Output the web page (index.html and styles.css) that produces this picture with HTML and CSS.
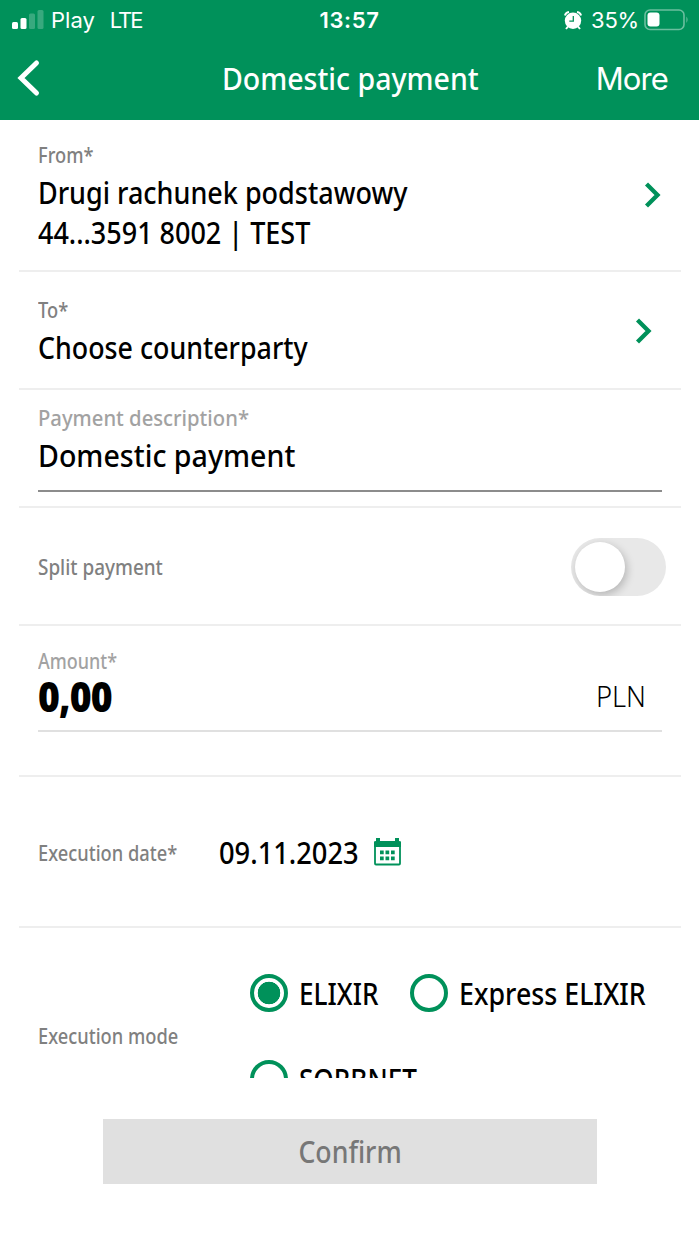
FILE: index.html
```html
<!DOCTYPE html>
<html lang="en">
<head>
<meta charset="utf-8">
<title>Domestic payment</title>
<link rel="stylesheet" href="styles.css">
</head>
<body>
<div class="screen">
  <header class="top">
    <div class="status">
      <div class="status-left">
        <svg class="signal" width="32" height="20" viewBox="0 0 32 20"><g fill="#fff"><rect x="0" y="12" width="6" height="7" rx="1.5"/><rect x="8.5" y="8" width="6" height="11" rx="1.5"/><g opacity=".22"><rect x="17" y="3.5" width="6" height="15.500" rx="1.500"/><rect x="25.500" y="0" width="6" height="19" rx="1.500"/></g></g></svg>
        <span class="carrier">Play</span><span class="network">LTE</span>
      </div>
      <span class="clock">13:57</span>
      <div class="status-right">
        <svg class="alarm" width="18" height="19" viewBox="0 0 18 19"><circle cx="9" cy="9.800" r="8.200" fill="#fff"/><path d="M1 4.500Q1.500 1.500 5 1M17 4.500Q16.500 1.500 13 1M4 15.500L2 18M14 15.500L16 18" stroke="#fff" stroke-width="2" fill="none"/><path d="M9.300 5V10.200H5.300" stroke="#00915a" stroke-width="1.300" fill="none"/></svg>
        <span class="percent">35%</span>
        <svg class="battery" width="45" height="22" viewBox="0 0 45 22"><rect x="1" y="1" width="39" height="19.500" rx="5" fill="none" stroke="#fff" stroke-opacity=".42" stroke-width="1.600"/><rect x="3.500" y="3.500" width="12" height="14" rx="3" fill="#fff"/><path d="M42.500 7.500Q44.500 10.700 42.500 14Z" fill="#fff" opacity=".5"/></svg>
      </div>
    </div>
    <nav class="nav">
      <svg class="back" width="24" height="38" viewBox="0 0 24 38"><path d="M19.500 4L4 19L19.500 34" fill="none" stroke="#fff" stroke-width="5" stroke-linecap="round" stroke-linejoin="miter"/></svg>
      <h1 class="title">Domestic payment</h1>
      <span class="more">More</span>
    </nav>
  </header>

  <main class="form">
    <section class="row from">
      <div>
        <div class="label">From*</div>
        <div class="value">Drugi rachunek podstawowy<br>44...3591 8002 | TEST</div>
      </div>
      <svg class="chevron" width="18" height="28" viewBox="0 0 18 28"><path d="M2.500 3L13.500 14L2.500 25" fill="none" stroke="#00915a" stroke-width="4.300"/></svg>
    </section>
    <section class="row to">
      <div>
        <div class="label">To*</div>
        <div class="value">Choose counterparty</div>
      </div>
      <svg class="chevron" width="18" height="28" viewBox="0 0 18 28"><path d="M2.500 3L13.500 14L2.500 25" fill="none" stroke="#00915a" stroke-width="4.300"/></svg>
    </section>
    <section class="row description">
      <div class="field strong">
        <div class="label pale">Payment description*</div>
        <div class="value">Domestic payment</div>
      </div>
    </section>
    <section class="row split">
      <div class="label">Split payment</div>
      <div class="toggle"><div class="knob"></div></div>
    </section>
    <section class="row amount">
      <div class="field">
        <div class="label pale">Amount*</div>
        <div class="sum"><span class="number">0,00</span><span class="currency">PLN</span></div>
      </div>
    </section>
    <section class="row date">
      <div class="label">Execution date*</div>
      <div class="value">09.11.2023</div>
      <svg class="calendar" width="27" height="28" viewBox="0 0 27 28"><rect x="1" y="4" width="25" height="22.500" rx="1" fill="none" stroke="#00915a" stroke-width="1.800"/><path fill="#00915a" d="M0 3.500H2V0H6V3H21V0H25V3.500H27V9H0ZM6 12.500H9.700V16.200H6ZM11.500 12.500H15.200V16.200H11.500ZM17 12.500H20.700V16.200H17ZM6 18.500H9.700V22.200H6ZM11.500 18.500H15.200V22.200H11.500ZM17 18.500H20.700V22.200H17Z"/></svg>
    </section>
    <section class="row mode">
      <div class="label">Execution mode</div>
      <div class="options">
        <div class="option"><i class="radio on"></i><span class="option-name">ELIXIR</span></div>
        <div class="option"><i class="radio"></i><span class="option-name express">Express ELIXIR</span></div>
        <div class="option"><i class="radio"></i><span class="option-name">SORBNET</span></div>
      </div>
    </section>
  </main>
  <footer class="actions"><button class="confirm"><span class="confirm-text">Confirm</span></button></footer>
</div>
</body>
</html>
```
FILE: styles.css
```css
* { box-sizing: border-box; }
body { margin: 0; background: #fff; font-family: "Noto Sans", "Open Sans", sans-serif; color: #000; }
svg { display: block; flex: none; }
.screen { width: 700px; height: 1244px; overflow: hidden; }

.top { height: 120px; width: 699px; background: #00915a; color: #fff; }
.status { display: grid; grid-template-columns: 1fr auto 1fr; height: 40px; align-items: center; font-family: Inter, sans-serif; font-size: 22px; line-height: 26px; }
.status-left { display: flex; align-items: center; padding-left: 12px; }
.carrier { margin-left: 7px; }
.network { margin-left: 15px; letter-spacing: -1.8px; }
.network { letter-spacing: -2px; }
.clock { font-weight: 600; letter-spacing: .6px; }
.status-right { display: flex; align-items: center; justify-content: flex-end; padding-right: 10px; }
.alarm { margin-right: 9px; }
.percent { letter-spacing: -.2px; }
.battery { margin-left: 5px; }
.nav { display: grid; grid-template-columns: 120px 1fr 120px; height: 76px; align-items: center; padding: 0 31px 0 17px; }
.title { margin: 0; padding-left: 17px; text-align: center; font-size: 31px; font-weight: 500; line-height: 40px; white-space: nowrap; transform: scaleX(.92); }
.more { justify-self: end; font-family: Inter, sans-serif; font-size: 31px; line-height: 40px; letter-spacing: -.9px; padding-top: 2px; }

/* Text is set slightly condensed */
.label, .value, .number, .option-name { transform: scaleX(.87); transform-origin: 0 50%; }

.form { height: 958px; padding: 0 19px; overflow: hidden; }
.row { display: flex; border-bottom: 2px solid #eee; padding: 0 19px; justify-content: space-between; }
.label { font-size: 21px; line-height: 32px; height: 30px; font-weight: 500; color: #808080; white-space: nowrap; }
.pale { color: #a2a2a2; }
.value { font-size: 31px; line-height: 40px; font-weight: 500; white-space: nowrap; }
.from { height: 152px; padding-top: 19px; }
.from .value { margin-top: 3px; }
.from .chevron { margin-top: 42px; }
.to { height: 118px; padding-top: 22px; }
.to .value { margin-top: 3px; transform: scaleX(.864); }
.to .chevron { margin: 23px 9px 0 0; }
.field { flex: 1; border-bottom: 2px solid #e0e0e0; }
.strong { border-bottom-color: #8c8c8c; }
.description { height: 118px; padding: 11px 19px 14px; }
.description .label { font-size: 22px; transform: scaleX(.92); }
.description .value { margin-top: 4px; transform: scaleX(.922); }
.split { height: 118px; align-items: center; padding-right: 15px; }
.split .label { transform: scaleX(.9); }
.toggle { width: 95px; height: 58px; border-radius: 29px; padding: 4px; margin-top: 1px; background: #e8e8e8; overflow: hidden; }
.knob { width: 50px; height: 50px; border-radius: 50%; background: #fff; box-shadow: 2px 3px 9px rgba(0,0,0,.22); }
.amount { height: 151px; padding: 19px 19px 43px; }
.amount .label { transform: scaleX(.855); }
.sum { display: flex; justify-content: space-between; align-items: flex-start; padding-right: 16px; line-height: 44px; margin-top: -1px; }
.number { font-size: 42px; font-weight: 900; letter-spacing: -1px; transform: scaleX(.89); }
.currency { font-size: 30px; font-weight: 300; transform: scaleX(.91); transform-origin: 100% 50%; }
.date { height: 151px; align-items: center; justify-content: flex-start; }
.date .label { width: 181px; }
.date .value { width: 155px; transform: scaleX(.88); }
.mode { height: 216px; align-items: center; border: 0; justify-content: flex-start; }
.mode .label { width: 212px; flex: none; line-height: 30px; }
.options { display: grid; grid-template-columns: 160px auto; row-gap: 44px; flex: none; font-size: 30px; font-weight: 500; line-height: 40px; white-space: nowrap; }
.option { display: flex; align-items: center; gap: 11px; width: 160px; }
.option-name { padding-top: 2px; }
.express { transform: scaleX(.893); }
.radio { flex: none; width: 38px; height: 38px; border: 4px solid #00915a; border-radius: 50%; }
.on { background: radial-gradient(circle, #00915a 11px, #fff 11.6px); }
.actions { padding: 41px 103px 0; }
.confirm { display: block; width: 494px; height: 65px; border: 0; padding: 0; background: #e0e0e0; color: #777; font-family: "Noto Sans", sans-serif; font-size: 30px; font-weight: 500; line-height: 40px; }
.confirm-text { display: inline-block; transform: scaleX(.89); }
```
